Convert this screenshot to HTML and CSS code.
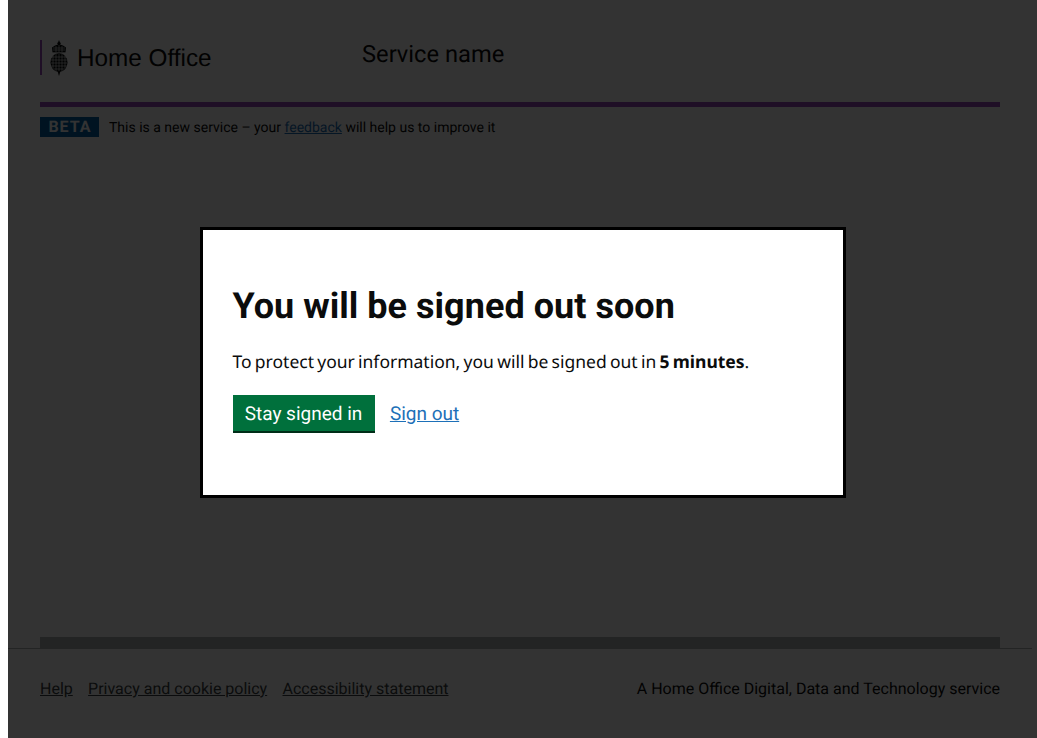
FILE: index.html
```html
<!DOCTYPE html>
<html lang="en">
<head>
<meta charset="utf-8">
<title>Home Office - Service name</title>
<link rel="stylesheet" href="styles.css">
</head>
<body>
<div class="page">
  <div class="wrap">
    <header class="header">
      <a class="logo" href="#">
        <svg class="crest" viewBox="0 0 20 36" width="20" height="36" aria-hidden="true">
          <path class="crest-fill" d="M10 0l1 2.500 1 .5-1 1.500 3 1 3 2-.5 5h-13L3 7.500l3-2 3-1L8 3l1-.5z"/>
          <ellipse class="crest-fill" cx="10" cy="22.500" rx="8.500" ry="9.500"/>
          <path class="crest-fill" d="M8.500 31h3L10 36z"/>
          <path class="crest-line" d="M4 8h12M4 10h12M7 6v6M10 5v7M13 6v6M3 13h14M2 17h16M2 20h16M2 23h16M2 26h16M4 29h12M4 15v13M7 14v17M10 14v17M13 14v17M16 15v13"/>
        </svg>
        <span class="logo-text">Home Office</span>
      </a>
      <span class="service-name">Service name</span>
    </header>
    <div class="rule"></div>
    <p class="phase"><strong class="tag">BETA</strong><span class="phase-text">This is a new service – your <a href="#" class="feedback">feedback</a> will help us to improve it</span></p>
    <main class="main"></main>
    <div class="band"></div>
  </div>
  <footer class="footer">
    <div class="footer-in">
      <nav class="footer-links">
        <a href="#">Help</a>
        <a href="#">Privacy and cookie policy</a>
        <a href="#">Accessibility statement</a>
      </nav>
      <span>A Home Office Digital, Data and Technology service</span>
    </div>
  </footer>
</div>
<div class="overlay">
  <div class="dialog" role="dialog" aria-modal="true">
    <h1 class="title">You will be signed out soon</h1>
    <p class="text">To protect your information, you will be signed out in <strong>5 minutes</strong>.</p>
    <div class="actions">
      <a class="button" href="#">Stay signed in</a>
      <a class="signout" href="#">Sign out</a>
    </div>
  </div>
</div>
</body>
</html>
```
FILE: styles.css
```css
html {
  background: #fff;
  height: 100%;
  overflow: hidden;
}
body {
  margin: 0 0 0 8px;
  width: 1024px;
  font-family: Roboto, sans-serif;
  color: #0b0c0c;
  text-rendering: geometricPrecision;
}
.wrap {
  margin: 0 24px 0 32px;
  width: 960px;
}
.header {
  display: flex;
  align-items: flex-start;
  height: 102px;
  box-sizing: border-box;
  padding-top: 40px;
}
.logo {
  display: flex;
  align-items: center;
  width: 322px;
  height: 35px;
  color: #0b0c0c;
  text-decoration: none;
  border-left: 2px solid #9b4bbd;
  box-sizing: border-box;
  padding-left: 7px;
}
.crest { flex: none; }
.crest-fill { fill: #0b0c0c; }
.crest-line { stroke: #fff; stroke-width: .6; fill: none; }
.logo-text {
  margin-left: 8px;
  padding-top: 2px;
  font: 24.3px/36px "Liberation Sans", Arial, sans-serif;
}
.service-name {
  font-size: 23.7px;
  line-height: 28px;
}
.rule {
  height: 5px;
  background: #9b4bbd;
}
.phase {
  display: flex;
  align-items: center;
  gap: 10px;
  margin: 10px 0 0;
  height: 20px;
  font-size: 14px;
}
.phase-text { padding-top: 1px; }
.tag {
  background: #005ea5;
  color: #fff;
  width: 59px;
  padding-left: 1px;
  box-sizing: border-box;
  text-align: center;
  font-size: 16px;
  font-weight: 700;
  letter-spacing: 1px;
  line-height: 20px;
}
.feedback { color: #1d70b8; }
.main { height: 500px; }
.band {
  height: 11px;
  background: #b1b4b6;
}
.footer {
  border-top: 1px solid #b1b4b6;
  height: 89px;
}
.footer-in {
  display: flex;
  justify-content: space-between;
  align-items: center;
  width: 960px;
  margin-left: 32px;
  height: 79px;
  font-size: 16px;
}
.footer-links {
  display: flex;
  gap: 15.3px;
}
.footer-links a { color: #3a3f41; }
.overlay {
  position: fixed;
  inset: 0 0 0 8px;
  background: rgba(0, 0, 0, .8);
  display: flex;
  justify-content: center;
  align-items: flex-start;
  padding-top: 227px;
  box-sizing: border-box;
}
.dialog {
  width: 646px;
  height: 270.7px;
  box-sizing: border-box;
  border: 3px solid #000;
  background: #fff;
  padding: 30px;
}
.title {
  margin: 25px 0 0;
  font-size: 36px;
  line-height: 42px;
  font-weight: 700;
  letter-spacing: .03px;
}
.text {
  margin: 23px 0 0;
  font-family: "Noto Sans", sans-serif;
  font-size: 17.5px;
  word-spacing: -1.3px;
  line-height: 24px;
}
.actions {
  display: flex;
  align-items: center;
  gap: 15px;
  margin-top: 21px;
}
.button {
  width: 142px;
  height: 36px;
  line-height: 37px;
  text-align: center;
  background: #00703c;
  box-shadow: 0 2px 0 #002d18;
  color: #fff;
  font-size: 19px;
  text-decoration: none;
}
.signout {
  color: #1d70b8;
  font-size: 19px;
  margin-left: .4px;
}
```
